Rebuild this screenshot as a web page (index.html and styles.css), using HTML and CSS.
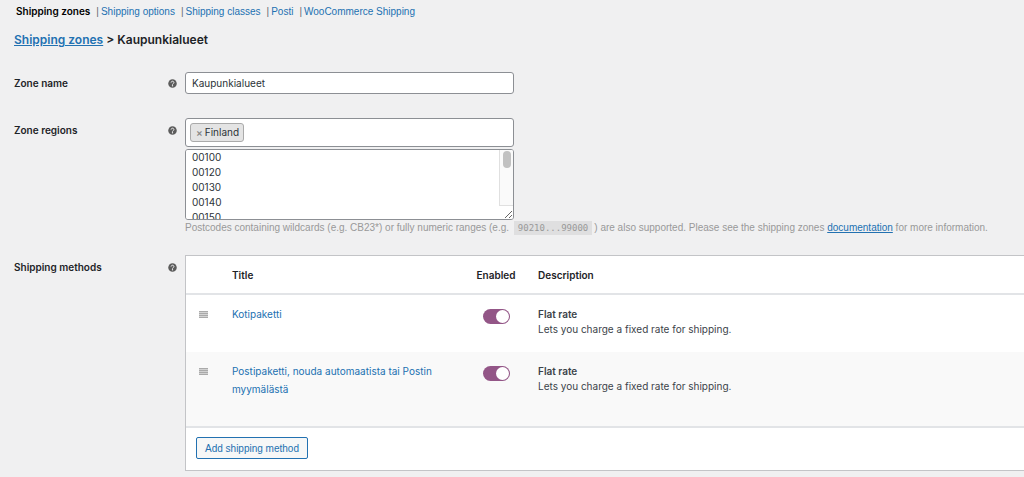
FILE: index.html
```html
<!DOCTYPE html>
<html lang="en">
<head>
<meta charset="utf-8">
<title>Shipping zones - Kaupunkialueet</title>
<meta name="viewport" content="width=device-width, initial-scale=1.0">
<link rel="stylesheet" href="styles.css">
</head>
<body>
<svg class="defs" width="0" height="0" aria-hidden="true">
<symbol id="help" viewBox="0 0 18 18">
<circle cx="9" cy="9" r="8.5" fill="#5c5c5c"/>
<path d="M6.2 7.2a2.8 2.6 0 1 1 4.4 2C9.5 9.900 9 10 9 11.200" fill="none" stroke="#f0f0f1" stroke-width="2"/>
<circle cx="9" cy="13.500" r="1.300" fill="#f0f0f1"/>
</symbol>
<symbol id="sort" viewBox="0 0 9 7">
<path d="M0 .5h9M0 2.500h9M0 4.500h9M0 6.500h9" stroke="#aaa" stroke-width="1.300"/>
</symbol>
</svg>

<ul class="subnav">
<li><a href="#" class="current">Shipping zones</a></li>
<li><a href="#">Shipping options</a></li>
<li><a href="#">Shipping classes</a></li>
<li><a href="#">Posti</a></li>
<li><a href="#">WooCommerce Shipping</a></li>
</ul>

<h2><a href="#">Shipping zones</a> &gt; Kaupunkialueet</h2>

<form class="settings">
<div class="row">
<div class="label"><label for="zone_name">Zone name</label><svg class="help"><use href="#help"/></svg></div>
<div class="field">
<input type="text" id="zone_name" class="text" value="Kaupunkialueet">
</div>
</div>

<div class="row row-regions">
<div class="label"><label for="zone_region">Zone regions</label><svg class="help"><use href="#help"/></svg></div>
<div class="field">
<div class="select">
<span class="choice"><button type="button" aria-label="Remove Finland">×</button>Finland</span>
<input type="text" id="zone_region">
</div>
<div class="postcodes-wrap">
<textarea class="postcodes" aria-label="Postcodes">00100
00120
00130
00140
00150
00160
00170
00180
00190
00200
00210
00220
00230
00240</textarea>
<span class="scrollbar" aria-hidden="true"></span>
</div>
<p class="description">Postcodes containing wildcards (e.g. CB23*) or fully numeric ranges (e.g. <code>90210...99000</code>) are also supported. Please see the shipping zones <a href="#">documentation</a> for more information.</p>
</div>
</div>

<div class="row row-methods">
<div class="label"><span>Shipping methods</span><svg class="help"><use href="#help"/></svg></div>
<div class="field">
<table class="methods">
<thead>
<tr>
<th class="sort"></th>
<th class="title">Title</th>
<th class="enabled">Enabled</th>
<th>Description</th>
</tr>
</thead>
<tbody>
<tr>
<td class="sort"><svg><use href="#sort"/></svg></td>
<td class="title"><a href="#">Kotipaketti</a></td>
<td class="enabled"><input type="checkbox" class="toggle" aria-label="Enable Kotipaketti" checked></td>
<td><strong>Flat rate</strong><p>Lets you charge a fixed rate for shipping.</p></td>
</tr>
<tr>
<td class="sort"><svg><use href="#sort"/></svg></td>
<td class="title"><a href="#">Postipaketti, nouda automaatista tai Postin myymälästä</a></td>
<td class="enabled"><input type="checkbox" class="toggle" aria-label="Enable Postipaketti" checked></td>
<td><strong>Flat rate</strong><p>Lets you charge a fixed rate for shipping.</p></td>
</tr>
</tbody>
<tfoot>
<tr>
<td colspan="4"><button type="button" class="button">Add shipping method</button></td>
</tr>
</tfoot>
</table>
</div>
</div>
</form>
</body>
</html>
```
FILE: styles.css
```css
* {
box-sizing: border-box;
}

body {
margin: 0;
padding: 4px 0 8px 14px;
background: #f0f0f1;
color: #3c434a;
font-family: Inter, "Liberation Sans", sans-serif;
font-size: 10px;
line-height: 15px;
overflow-x: hidden;
}

a {
color: #2271b1;
}

p {
margin: 0;
}

.defs {
position: absolute;
}

.subnav {
display: flex;
margin: 0;
padding: 0 0 0 2px;
list-style: none;
}

.subnav li + li {
font-family: "Liberation Sans", sans-serif;
}

.subnav li + li::before {
content: "|";
margin: 0 2px 0 6px;
color: #646970;
}

.subnav a {
text-decoration: none;
}

.subnav .current {
color: #000;
font-weight: 600;
}

h2 {
margin: 11px 0 22px;
color: #1d2327;
font-size: 12px;
font-weight: 600;
line-height: 20px;
}

.row {
display: grid;
grid-template-columns: 171px minmax(0, 1fr);
margin-bottom: 24px;
}

.row-regions {
margin-bottom: 19px;
}

.row-methods {
margin-bottom: 0;
}

.label {
display: flex;
justify-content: space-between;
align-items: center;
height: 22px;
padding-right: 8px;
color: #1d2327;
font-weight: 600;
}

.row-regions .label,
.row-methods .label {
height: 25px;
}

.help {
width: 9px;
height: 9px;
}

.text,
.select,
.postcodes {
display: block;
width: 329px;
max-width: 100%;
border: 1px solid #8c8f94;
border-radius: 3px;
background: #fff;
color: #2c3338;
font: inherit;
}

.text {
height: 22px;
padding: 0 6px;
}

.select {
display: flex;
align-items: center;
height: 29px;
padding: 0 4px;
}

.select input {
flex: 1;
min-width: 0;
border: 0;
outline: 0;
background: none;
font: inherit;
}

.choice {
display: flex;
align-items: center;
height: 19px;
padding: 0 4px 0 5px;
border: 1px solid #aaa;
border-radius: 3px;
background: #e4e4e4;
}

.choice button {
padding: 0 2px 0 0;
border: 0;
background: none;
color: #888;
font: inherit;
font-weight: 600;
}

.postcodes-wrap {
position: relative;
width: 329px;
max-width: 100%;
margin-top: 2px;
}

.postcodes {
height: 71px;
padding: 0 6px;
line-height: 15px;
scrollbar-width: none;
}

/* thin scrollbar drawn over the textarea, the resize corner stays free */
.scrollbar {
position: absolute;
top: 1px;
right: 1px;
bottom: 14px;
width: 14px;
border-left: 1px solid #e0e0e0;
border-bottom: 1px solid #e0e0e0;
border-radius: 0 2px 0 0;
background: #fafafa;
pointer-events: none;
}

.scrollbar::before {
content: "";
display: block;
width: 8px;
height: 17px;
margin: 1px 0 0 3px;
border-radius: 4px;
background: #c1c1c1;
}

.description {
color: #999;
font-family: "Liberation Sans", sans-serif;
}

.description code {
margin: 0 2px;
padding: 2px 4px;
background: #dfdfe0;
font-family: "DejaVu Sans Mono", monospace;
font-size: 9px;
}

.methods {
width: 100%;
border: 1px solid #c3c4c7;
border-right: 0;
border-collapse: separate;
border-spacing: 0;
background: #fff;
}

.methods th,
.methods td {
padding: 12px 10px 10px;
text-align: left;
vertical-align: top;
}

.methods th {
height: 39px;
border-bottom: 2px solid #e2e4e7;
color: #1d2327;
font-weight: 600;
}

.methods .sort {
width: 36px;
padding-left: 13px;
}

.sort svg {
display: block;
width: 9px;
height: 7px;
margin-top: 4px;
}

.methods .title {
width: 242px;
}

.title a {
display: block;
line-height: 18px;
text-decoration: none;
}

.methods .enabled {
width: 64px;
padding-right: 0;
padding-left: 0;
text-align: center;
}

.methods tbody td {
height: 57px;
}

.methods tbody .title {
padding-top: 10px;
}

.methods tbody tr:nth-child(even) td {
height: 74px;
background: #f9f9f9;
}

.methods strong {
display: block;
font-weight: 600;
}

.toggle {
appearance: none;
display: block;
width: 27px;
height: 15px;
margin: 2px auto 0;
padding: 1px 1px 1px 13px;
border-radius: 8px;
background: #935687;
}

.toggle::before {
content: "";
display: block;
width: 13px;
height: 13px;
border-radius: 50%;
background: #fff;
}

.methods tfoot td {
height: 44px;
padding: 9px 10px;
border-top: 2px solid #e2e4e7;
}

.button {
display: block;
height: 22px;
padding: 0 8px;
border: 1px solid #2271b1;
border-radius: 2px;
background: #f6f7f7;
color: #2271b1;
font: inherit;
font-family: "Liberation Sans", sans-serif;
}
```
